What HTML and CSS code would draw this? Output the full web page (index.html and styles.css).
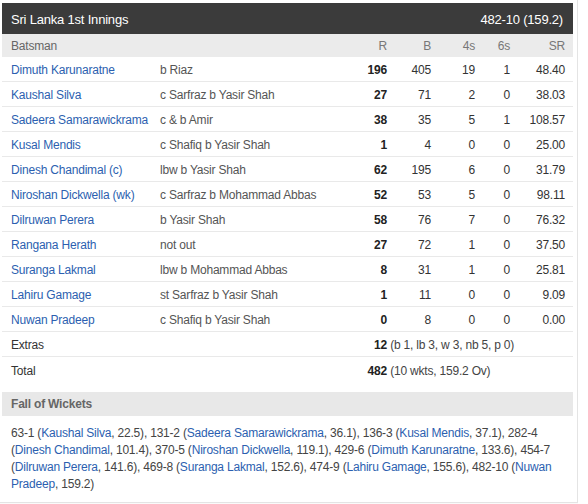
FILE: index.html
```html
<!DOCTYPE html>
<html>
<head>
<meta charset="utf-8">
<link rel="stylesheet" href="styles.css">
</head>
<body>
<div class="page">
  <div class="card">
    <div class="title">
      <span>Sri Lanka 1st Innings</span>
      <span>482-10 (159.2)</span>
    </div>
    <div class="row head">
      <div>Batsman</div><div></div><div class="n">R</div><div class="n">B</div><div class="n">4s</div><div class="n">6s</div><div class="n">SR</div>
    </div>
    <div class="row"><a class="name">Dimuth Karunaratne</a><div class="dis">b Riaz</div><div class="n b">196</div><div class="n">405</div><div class="n">19</div><div class="n">1</div><div class="n">48.40</div></div>
    <div class="row"><a class="name">Kaushal Silva</a><div class="dis">c Sarfraz b Yasir Shah</div><div class="n b">27</div><div class="n">71</div><div class="n">2</div><div class="n">0</div><div class="n">38.03</div></div>
    <div class="row"><a class="name">Sadeera Samarawickrama</a><div class="dis">c &amp; b Amir</div><div class="n b">38</div><div class="n">35</div><div class="n">5</div><div class="n">1</div><div class="n">108.57</div></div>
    <div class="row"><a class="name">Kusal Mendis</a><div class="dis">c Shafiq b Yasir Shah</div><div class="n b">1</div><div class="n">4</div><div class="n">0</div><div class="n">0</div><div class="n">25.00</div></div>
    <div class="row"><a class="name">Dinesh Chandimal (c)</a><div class="dis">lbw b Yasir Shah</div><div class="n b">62</div><div class="n">195</div><div class="n">6</div><div class="n">0</div><div class="n">31.79</div></div>
    <div class="row"><a class="name">Niroshan Dickwella (wk)</a><div class="dis">c Sarfraz b Mohammad Abbas</div><div class="n b">52</div><div class="n">53</div><div class="n">5</div><div class="n">0</div><div class="n">98.11</div></div>
    <div class="row"><a class="name">Dilruwan Perera</a><div class="dis">b Yasir Shah</div><div class="n b">58</div><div class="n">76</div><div class="n">7</div><div class="n">0</div><div class="n">76.32</div></div>
    <div class="row"><a class="name">Rangana Herath</a><div class="dis">not out</div><div class="n b">27</div><div class="n">72</div><div class="n">1</div><div class="n">0</div><div class="n">37.50</div></div>
    <div class="row"><a class="name">Suranga Lakmal</a><div class="dis">lbw b Mohammad Abbas</div><div class="n b">8</div><div class="n">31</div><div class="n">1</div><div class="n">0</div><div class="n">25.81</div></div>
    <div class="row"><a class="name">Lahiru Gamage</a><div class="dis">st Sarfraz b Yasir Shah</div><div class="n b">1</div><div class="n">11</div><div class="n">0</div><div class="n">0</div><div class="n">9.09</div></div>
    <div class="row"><a class="name">Nuwan Pradeep</a><div class="dis">c Shafiq b Yasir Shah</div><div class="n b">0</div><div class="n">8</div><div class="n">0</div><div class="n">0</div><div class="n">0.00</div></div>
    <div class="row sum"><div class="label">Extras</div><div class="val"><span class="tot">12</span> (b 1, lb 3, w 3, nb 5, p 0)</div></div>
    <div class="row sum last"><div class="label">Total</div><div class="val"><span class="tot">482</span> (10 wkts, 159.2 Ov)</div></div>

    <div class="fow-head">Fall of Wickets</div>
    <div class="fow"><span class="w">63-1</span> (<a>Kaushal Silva</a>, 22.5), <span class="w">131-2</span> (<a>Sadeera Samarawickrama</a>, 36.1), <span class="w">136-3</span> (<a>Kusal Mendis</a>, 37.1), <span class="w">282-4</span> (<a>Dinesh Chandimal</a>, 101.4), <span class="w">370-5</span> (<a>Niroshan Dickwella</a>, 119.1), <span class="w">429-6</span> (<a>Dimuth Karunaratne</a>, 133.6), <span class="w">454-7</span> (<a>Dilruwan Perera</a>, 141.6), <span class="w">469-8</span> (<a>Suranga Lakmal</a>, 152.6), <span class="w">474-9</span> (<a>Lahiru Gamage</a>, 155.6), <span class="w">482-10</span> (<a>Nuwan Pradeep</a>, 159.2)</div>
  </div>
</div>
<div class="next"></div>
</body>
</html>
```

FILE: styles.css
```css
html, body {
  margin: 0;
  padding: 0;
  background: #ffffff;
}
body {
  font-family: "Liberation Sans", Arial, sans-serif;
  font-size: 12px;
  letter-spacing: -0.2px;
  color: #333333;
}
.page {
  width: 571px;
  padding: 3px 4px 0 2px;
  border-right: 1px solid #e4e4e4;
}
.card {
  width: 571px;
}
.title {
  height: 31px;
  box-sizing: border-box;
  padding: 1px 10px 0 9px;
  background: #3b3b3b;
  color: #ffffff;
  font-size: 13px;
  display: flex;
  align-items: center;
  justify-content: space-between;
}
.row {
  display: grid;
  grid-template-columns: 149px 1fr 44px 44px 44px 35px 55px;
  align-items: center;
  box-sizing: border-box;
  height: 25px;
  padding: 2px 8px 0 9px;
  border-bottom: 1px solid #e9e9e9;
  color: #555555;
}
.row.head {
  height: 23px;
  padding-top: 1px;
  background: #ebebeb;
  border-bottom: none;
  color: #666666;
}
.row.last {
  border-bottom: none;
}
.name {
  color: #2c5fb0;
  white-space: nowrap;
}
.dis {
  color: #555555;
  white-space: nowrap;
}
.n {
  text-align: right;
  color: #333333;
}
.row.head .n {
  color: #777777;
}
.b {
  font-weight: bold;
  color: #222222;
}
.sum .label {
  grid-column: 1 / 3;
  color: #333333;
}
.sum .val {
  grid-column: 3 / 8;
  white-space: nowrap;
  color: #444444;
}
.tot {
  display: inline-block;
  width: 44px;
  text-align: right;
  font-weight: bold;
  color: #222222;
}
.fow-head {
  margin-top: 10px;
  height: 24px;
  line-height: 25px;
  background: #e8e8e8;
  padding-left: 9px;
  font-weight: bold;
  color: #666666;
}
.fow {
  box-sizing: border-box;
  height: 86px;
  padding: 9px 8px 0 9px;
  line-height: 17px;
  color: #444444;
}
.w {
  white-space: nowrap;
}
.fow a {
  color: #2c5fb0;
}
.next {
  width: 578px;
  border-top: 1px solid #e4e4e4;
  height: 10px;
  background: #fafafa;
}
```
